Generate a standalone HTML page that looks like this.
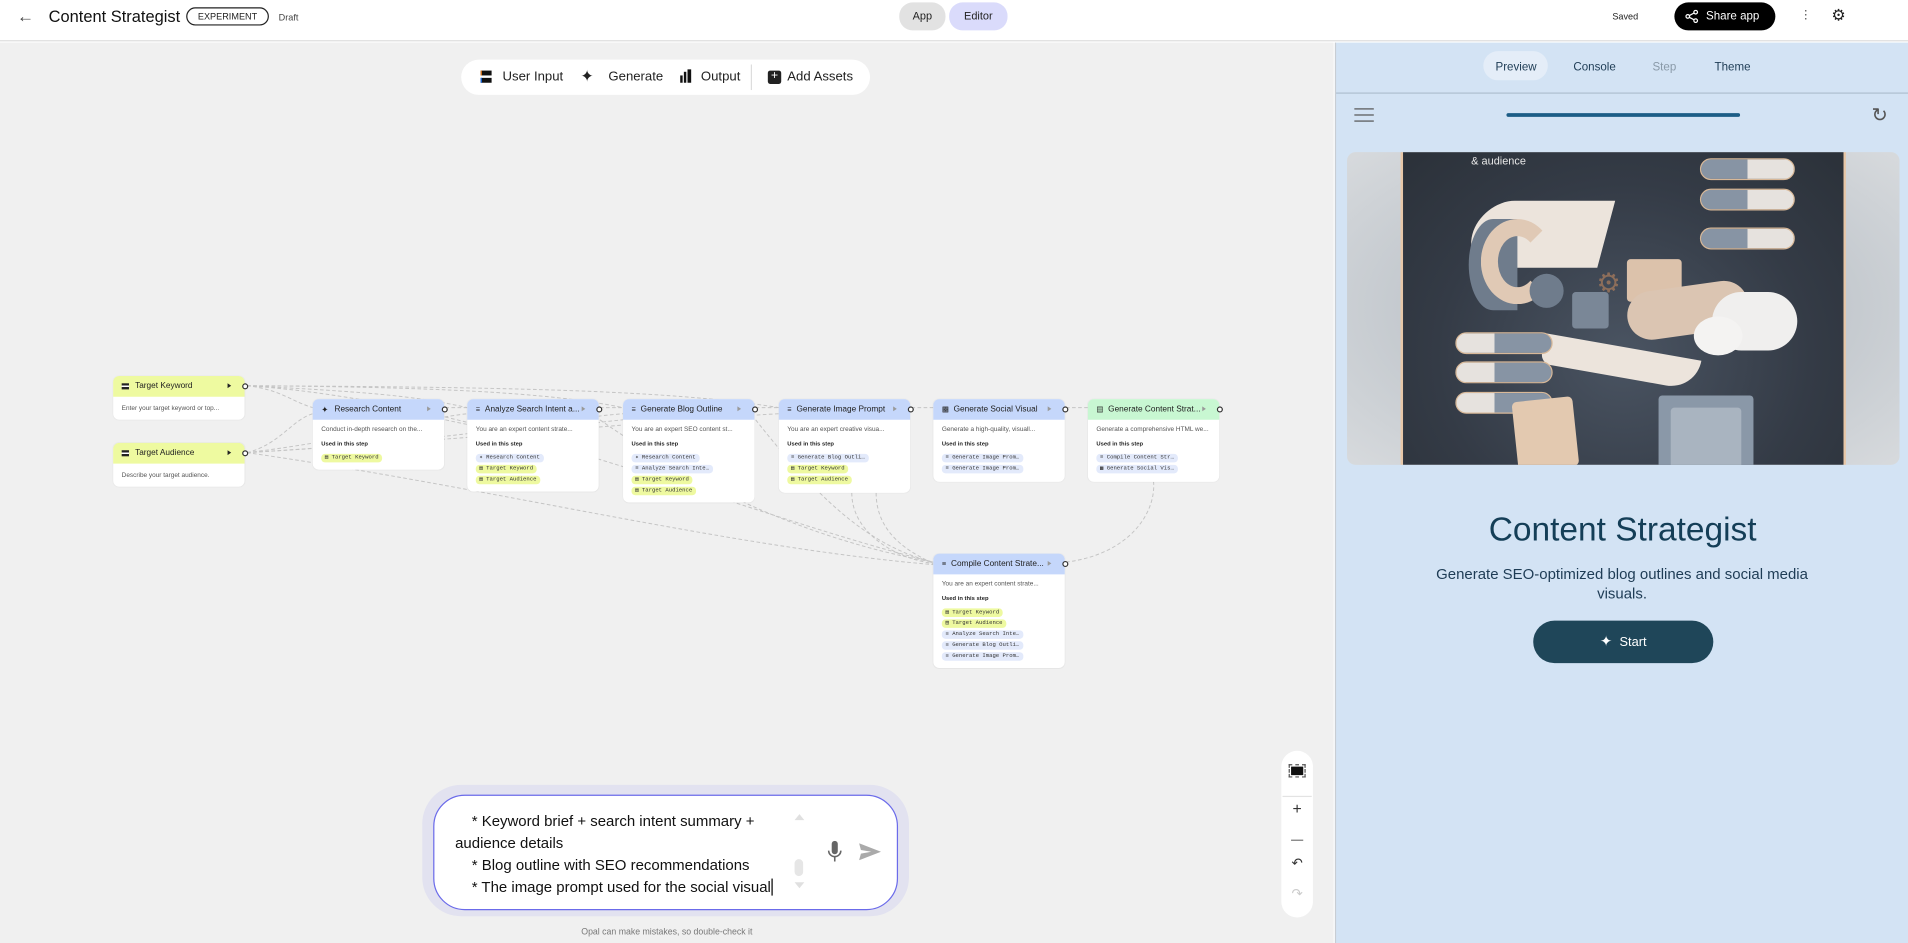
<!DOCTYPE html>
<html><head><meta charset="utf-8">
<style>
*{box-sizing:border-box;margin:0;padding:0}
html,body{width:1908px;height:943px;overflow:hidden;background:#fff;font-family:"Liberation Sans",sans-serif}
#w{position:absolute;left:0;top:0;width:1568px;height:775px;transform:scale(1.21684);transform-origin:0 0;overflow:hidden}
.a{position:absolute}
.top{left:0;top:0;width:1568px;height:34px;background:#fff;border-bottom:1px solid #ddd}
.canvas{left:0;top:35px;width:1096px;height:740px;background:#f0f0f0}
.panel{left:1097px;top:35px;width:471px;height:740px;background:#d3e3f4;border-left:1px solid #c8cdd3}
.node{position:absolute;width:108px;background:#fff;border-radius:5px;font-size:5.3px;color:#555;box-shadow:0 0 1px rgba(0,0,0,.08)}
.node .h{height:17px;border-radius:5px 5px 0 0;background:#c5d7fb;display:flex;align-items:center;padding-left:7px;font-size:6.8px;color:#222;position:relative}
.node .h .ic{width:6px;height:5px;margin-right:5px;display:inline-block}
.node .h .pl{position:absolute;right:11px;top:6px;width:0;height:0;border-left:3px solid #999;border-top:2px solid transparent;border-bottom:2px solid transparent}
.node .h .dot{position:absolute;right:-3px;top:6px;width:5px;height:5px;border-radius:50%;border:1px solid #333;background:#fff}
.node .b{padding:5px 7px 5px 7px}
.node .u{font-weight:bold;color:#222;font-size:4.8px;margin:7px 0 5px}
.chip{display:table;font-family:"Liberation Mono",monospace;font-size:4.6px;color:#333;background:#e3eafb;border-radius:3px;padding:1.2px 3px;margin-bottom:1.5px;white-space:nowrap}
.chip.y{background:#eef9a0}
.ylw{background:#eefaa0!important}
.grn{background:#c8f7d2!important}
.tb{left:379px;top:49px;width:336px;height:29px;background:#fff;border-radius:15px;font-size:10.8px;color:#222}
.tb span{position:absolute;top:8px}
</style></head><body><div id="w">

<div class="a top">
 <div class="a" style="left:14px;top:5px;font-size:14px;color:#444">&#8592;</div>
 <div class="a" style="left:40px;top:6px;font-size:13.5px;color:#111">Content Strategist</div>
 <div class="a" style="left:153px;top:6px;width:68px;height:15px;border:1px solid #222;border-radius:8px;font-size:7.5px;text-align:center;line-height:13px;color:#222">EXPERIMENT</div>
 <div class="a" style="left:229px;top:10px;font-size:7.5px;color:#444">Draft</div>
 <div class="a" style="left:739px;top:2px;width:38px;height:23px;background:#e2e2e2;border-radius:11px;font-size:9px;text-align:center;line-height:23px;color:#222">App</div>
 <div class="a" style="left:780px;top:2px;width:48px;height:23px;background:#dadbfb;border-radius:11px;font-size:9px;text-align:center;line-height:23px;color:#222">Editor</div>
 <div class="a" style="left:1325px;top:9px;font-size:7.5px;color:#222">Saved</div>
 <div class="a" style="left:1376px;top:2px;width:83px;height:23px;background:#000;border-radius:12px;color:#fff;font-size:9.5px;line-height:23px;padding-left:26px">Share app
  <svg class="a" style="left:9px;top:6px" width="11" height="11" viewBox="0 0 11 11"><circle cx="8.5" cy="2" r="1.5" fill="none" stroke="#fff"/><circle cx="2" cy="5.5" r="1.5" fill="none" stroke="#fff"/><circle cx="8.5" cy="9" r="1.5" fill="none" stroke="#fff"/><path d="M3.3 4.8L7.2 2.7M3.3 6.2L7.2 8.3" stroke="#fff"/></svg></div>
 <div class="a" style="left:1479px;top:7px;font-size:10px;color:#555">&#8942;</div>
 <div class="a" style="left:1505px;top:5px;font-size:13px;color:#222">&#9881;</div>
</div>

<div class="a canvas"></div>

<svg class="a" style="left:0;top:0" width="1096" height="775">
<g fill="none" stroke="#c4c4c4" stroke-width="0.8" stroke-dasharray="3 2">
<path d="M203 317 C230 320 240 330 257 335"/>
<path d="M203 317 C300 322 340 325 384 335"/>
<path d="M203 317 C350 318 450 322 512 335"/>
<path d="M203 317 C400 318 550 320 640 335"/>
<path d="M203 317 C400 330 600 420 767 462"/>
<path d="M203 372 C230 365 240 345 257 340"/>
<path d="M203 372 C300 360 340 345 384 340"/>
<path d="M203 372 C400 360 450 345 512 340"/>
<path d="M203 372 C400 360 550 345 640 340"/>
<path d="M203 372 C400 400 600 450 767 464"/>
<path d="M366 335 L384 335"/><path d="M493 335 L512 335"/><path d="M621 335 L640 335"/><path d="M749 335 L767 335"/><path d="M876 335 L894 335"/>
<path d="M366 345 C430 360 460 350 512 345"/>
<path d="M493 345 C600 420 700 450 767 462"/>
<path d="M621 345 C680 420 720 450 767 462"/>
<path d="M700 405 C700 440 740 460 767 463"/>
<path d="M720 405 C720 440 750 455 767 463"/>
<path d="M876 462 C930 455 950 420 948 396"/>
</g></svg>

<!-- toolbar -->
<div class="a tb">
 <div class="a" style="left:16px;top:9px;width:9px;height:4px;background:#111;border-left:1px solid #e87b1b"></div><div class="a" style="left:16px;top:15px;width:9px;height:4px;background:#111;border-left:1px solid #1b6ee8"></div>
 <span style="left:34px">User Input</span>
 <span style="left:98px;top:6px;font-size:13px">&#10022;</span>
 <span style="left:121px">Generate</span>
 <div class="a" style="left:180px;top:13px;width:2px;height:6px;background:#111"></div><div class="a" style="left:183px;top:10px;width:2px;height:9px;background:#111"></div><div class="a" style="left:186px;top:8px;width:3px;height:11px;background:#111"></div>
 <span style="left:197px">Output</span>
 <div class="a" style="left:238px;top:4px;width:1px;height:21px;background:#ddd"></div>
 <div class="a" style="left:252px;top:9px;width:11px;height:11px;background:#222;border-radius:2px;color:#fff;font-size:10px;line-height:10px;text-align:center">+</div>
 <span style="left:268px">Add Assets</span>
</div>

<!-- nodes -->
<div class="node" style="left:93px;top:309px"><div class="h ylw"><span class="ic" style="background:linear-gradient(#222 40%,#fff 40%,#fff 60%,#222 60%)"></span>Target Keyword<span class="pl" style="border-left-color:#222;right:11px"></span><span class="dot"></span></div><div class="b" style="padding:7px 7px 6px">Enter your target keyword or top...</div></div>
<div class="node" style="left:93px;top:364px"><div class="h ylw"><span class="ic" style="background:linear-gradient(#222 40%,#fff 40%,#fff 60%,#222 60%)"></span>Target Audience<span class="pl" style="border-left-color:#222"></span><span class="dot"></span></div><div class="b" style="padding:7px 7px 6px">Describe your target audience.</div></div>

<div class="node" style="left:257px;top:328px;height:58px"><div class="h"><span style="margin-right:5px;font-size:7px">&#10022;</span>Research Content<span class="pl"></span><span class="dot"></span></div><div class="b">Conduct in-depth research on the...<div class="u">Used in this step</div><span class="chip y">&#9636; Target Keyword</span></div></div>

<div class="node" style="left:384px;top:328px;height:76px"><div class="h"><span style="margin-right:4px;font-size:6px">&#8801;</span>Analyze Search Intent a...<span class="pl"></span><span class="dot"></span></div><div class="b">You are an expert content strate...<div class="u">Used in this step</div><span class="chip">&#10022; Research Content</span><span class="chip y">&#9636; Target Keyword</span><span class="chip y">&#9636; Target Audience</span></div></div>

<div class="node" style="left:512px;top:328px;height:85px"><div class="h"><span style="margin-right:4px;font-size:6px">&#8801;</span>Generate Blog Outline<span class="pl"></span><span class="dot"></span></div><div class="b">You are an expert SEO content st...<div class="u">Used in this step</div><span class="chip">&#10022; Research Content</span><span class="chip">&#8801; Analyze Search Inte…</span><span class="chip y">&#9636; Target Keyword</span><span class="chip y">&#9636; Target Audience</span></div></div>

<div class="node" style="left:640px;top:328px;height:77px"><div class="h"><span style="margin-right:4px;font-size:6px">&#8801;</span>Generate Image Prompt<span class="pl"></span><span class="dot"></span></div><div class="b">You are an expert creative visua...<div class="u">Used in this step</div><span class="chip">&#8801; Generate Blog Outli…</span><span class="chip y">&#9636; Target Keyword</span><span class="chip y">&#9636; Target Audience</span></div></div>

<div class="node" style="left:767px;top:328px;height:68px"><div class="h"><span style="margin-right:4px;font-size:6px">&#9641;</span>Generate Social Visual<span class="pl"></span><span class="dot"></span></div><div class="b">Generate a high-quality, visuall...<div class="u">Used in this step</div><span class="chip">&#8801; Generate Image Prom…</span><span class="chip">&#8801; Generate Image Prom…</span></div></div>

<div class="node" style="left:894px;top:328px;height:68px"><div class="h grn"><span style="margin-right:4px;font-size:6px">&#9636;</span>Generate Content Strat...<span class="pl"></span><span class="dot"></span></div><div class="b">Generate a comprehensive HTML we...<div class="u">Used in this step</div><span class="chip">&#8801; Compile Content Str…</span><span class="chip">&#9641; Generate Social Vis…</span></div></div>

<div class="node" style="left:767px;top:455px;height:94px"><div class="h"><span style="margin-right:4px;font-size:6px">&#8801;</span>Compile Content Strate...<span class="pl"></span><span class="dot"></span></div><div class="b">You are an expert content strate...<div class="u">Used in this step</div><span class="chip y">&#9636; Target Keyword</span><span class="chip y">&#9636; Target Audience</span><span class="chip">&#8801; Analyze Search Inte…</span><span class="chip">&#8801; Generate Blog Outli…</span><span class="chip">&#8801; Generate Image Prom…</span></div></div>

<!-- zoom controls -->
<div class="a" style="left:1053px;top:617px;width:26px;height:137px;background:#fff;border-radius:13px;text-align:center;color:#333">
 <div class="a" style="left:8px;top:13px;width:10px;height:7px;background:#111;outline:1px dashed #555;outline-offset:1px"></div>
 <div class="a" style="left:1px;top:37px;width:24px;height:1px;background:#e3e3e3"></div>
 <div class="a" style="left:0;top:40px;width:26px;font-size:13px">+</div>
 <div class="a" style="left:8px;top:73px;width:10px;height:1px;background:#777"></div>
 <div class="a" style="left:0;top:86px;width:26px;font-size:11px">&#8630;</div>
 <div class="a" style="left:0;top:111px;width:26px;font-size:11px;color:#ccc">&#8631;</div>
</div>

<!-- chat -->
<div class="a" style="left:347px;top:645px;width:400px;height:108px;background:#e2e2f0;border-radius:32px"></div>
<div class="a" style="left:356px;top:653px;width:382px;height:95px;background:#fff;border:1px solid #6b6bea;border-radius:26px"></div>
<div class="a" style="left:374px;top:666px;font-size:12.3px;line-height:18px;color:#111;white-space:pre">    * Keyword brief + search intent summary +
audience details
    * Blog outline with SEO recommendations
    * The image prompt used for the social visual<span style="border-right:1px solid #000"></span></div>
<div class="a" style="left:653px;top:669px;width:0;height:0;border-left:4px solid transparent;border-right:4px solid transparent;border-bottom:5px solid #e0e0e0"></div>
<div class="a" style="left:653px;top:706px;width:7px;height:14px;background:#e6e6e6;border-radius:4px"></div>
<div class="a" style="left:653px;top:725px;width:0;height:0;border-left:4px solid transparent;border-right:4px solid transparent;border-top:5px solid #e0e0e0"></div>
<svg class="a" style="left:679px;top:691px" width="14" height="18" viewBox="0 0 14 18"><rect x="4.5" y="0" width="5" height="11" rx="2.5" fill="#666"/><path d="M2 8a5 5 0 0 0 10 0M7 13v4" stroke="#666" stroke-width="1.3" fill="none"/></svg>
<svg class="a" style="left:706px;top:693px" width="18" height="14" viewBox="0 0 18 14"><path d="M0 0L18 7L0 14L1.5 8.5L10 7L1.5 5.5Z" fill="#aaa"/></svg>
<div class="a" style="left:0;top:761px;width:1096px;text-align:center;font-size:7.2px;color:#777">Opal can make mistakes, so double-check it</div>

<!-- right panel -->
<div class="a panel">
 <div class="a" style="left:121px;top:7px;width:53px;height:24px;background:#e4edf8;border-radius:12px"></div>
 <div class="a" style="left:131px;top:15px;font-size:9.5px;color:#1e3c55">Preview</div>
 <div class="a" style="left:195px;top:15px;font-size:9.5px;color:#1e3c55">Console</div>
 <div class="a" style="left:260px;top:15px;font-size:9.5px;color:#8a9aa8">Step</div>
 <div class="a" style="left:311px;top:15px;font-size:9.5px;color:#1e3c55">Theme</div>
 <div class="a" style="left:0;top:41px;width:471px;height:1px;background:#aebfd0"></div>
 <div class="a" style="left:15px;top:54px;width:16px;height:1.3px;background:#555;box-shadow:0 5px 0 #555,0 10px 0 #555"></div>
 <div class="a" style="left:140px;top:58px;width:192px;height:3px;background:#1c5d86;border-radius:2px"></div>
 <div class="a" style="left:440px;top:50px;font-size:16px;color:#555">&#8635;</div>
 <!-- image -->
 <div class="a" style="left:9px;top:90px;width:454px;height:257px;border-radius:7px;overflow:hidden;background:radial-gradient(ellipse at center,#aeb4ba 0%,#c6cbd0 60%,#d7dadd 100%)">
  <div class="a" style="left:44px;top:0;width:366px;height:257px;background:radial-gradient(ellipse at 50% 65%,#4a5462 0%,#343b46 60%,#2b3139 100%);border-left:2px solid #e7c7a8;border-right:2px solid #e7c7a8"></div>
  <div class="a" style="left:102px;top:2px;font-size:9px;color:#e8e8e8">&amp; audience</div>
  <div class="a" style="left:103px;top:40px;width:110px;height:55px;border-radius:55px 0 0 55px;background:#ece4dc;transform:skewX(-15deg)"></div>
  <div class="a" style="left:100px;top:55px;width:40px;height:75px;border-radius:50% 0 0 50%;background:#6f7c8c"></div>
  <div class="a" style="left:110px;top:55px;width:60px;height:70px;border-radius:50%;border:14px solid #e0c9b5;border-right-color:transparent"></div>
  <div class="a" style="left:150px;top:100px;width:28px;height:28px;border-radius:50%;background:#6f7c8c"></div>
  <div class="a" style="left:230px;top:88px;width:45px;height:35px;background:#dcc2ab;border-radius:3px"></div>
  <div class="a" style="left:185px;top:115px;width:30px;height:30px;background:#7a8797;border-radius:3px"></div>
  <div class="a" style="left:205px;top:95px;font-size:22px;color:#8d6e5a">&#9881;</div>
  <div class="a" style="left:230px;top:110px;width:100px;height:40px;background:#dbc5b2;border-radius:20px;transform:rotate(-8deg)"></div>
  <div class="a" style="left:160px;top:160px;width:130px;height:25px;background:#ece4dc;border-radius:0 0 60px 20px;transform:rotate(10deg)"></div>
  <div class="a" style="left:300px;top:115px;width:70px;height:48px;background:#f0efee;border-radius:30px"></div>
  <div class="a" style="left:285px;top:135px;width:40px;height:32px;background:#f4f3f2;border-radius:50%"></div>
  <div class="a" style="left:290px;top:5px;width:78px;height:18px;border:1.5px solid #d8b898;border-radius:9px;background:linear-gradient(90deg,#8794a4 50%,#e6e2de 50%)"></div>
  <div class="a" style="left:290px;top:30px;width:78px;height:18px;border:1.5px solid #d8b898;border-radius:9px;background:linear-gradient(90deg,#8794a4 50%,#e6e2de 50%)"></div>
  <div class="a" style="left:290px;top:62px;width:78px;height:18px;border:1.5px solid #d8b898;border-radius:9px;background:linear-gradient(90deg,#8794a4 50%,#e6e2de 50%)"></div>
  <div class="a" style="left:89px;top:148px;width:80px;height:18px;border:1.5px solid #d8b898;border-radius:9px;background:linear-gradient(90deg,#e6e2de 40%,#8794a4 40%)"></div>
  <div class="a" style="left:89px;top:172px;width:80px;height:18px;border:1.5px solid #d8b898;border-radius:9px;background:linear-gradient(90deg,#e6e2de 40%,#8794a4 40%)"></div>
  <div class="a" style="left:89px;top:197px;width:80px;height:18px;border:1.5px solid #d8b898;border-radius:9px;background:linear-gradient(90deg,#e6e2de 40%,#8794a4 40%)"></div>
  <div class="a" style="left:138px;top:203px;width:50px;height:57px;background:#e3c9b0;border-radius:4px;transform:rotate(-6deg)"></div>
  <div class="a" style="left:256px;top:200px;width:78px;height:60px;background:#8a98a8;border-radius:3px"></div>
  <div class="a" style="left:266px;top:210px;width:58px;height:50px;background:#a9b4c0;border-radius:3px"></div>
 </div>
 <div class="a" style="left:0;top:384px;width:471px;text-align:center;font-size:27.5px;color:#143e57">Content Strategist</div>
 <div class="a" style="left:79px;top:429px;width:312px;text-align:center;font-size:12.3px;line-height:16px;color:#1e3c55">Generate SEO-optimized blog outlines and social media visuals.</div>
 <div class="a" style="left:162px;top:475px;width:148px;height:35px;background:#1f4659;border-radius:18px;color:#fff;font-size:10.5px;line-height:35px;text-align:center"><span style="font-size:12px;margin-right:6px">&#10022;</span>Start</div>
</div>

</div></body></html>
